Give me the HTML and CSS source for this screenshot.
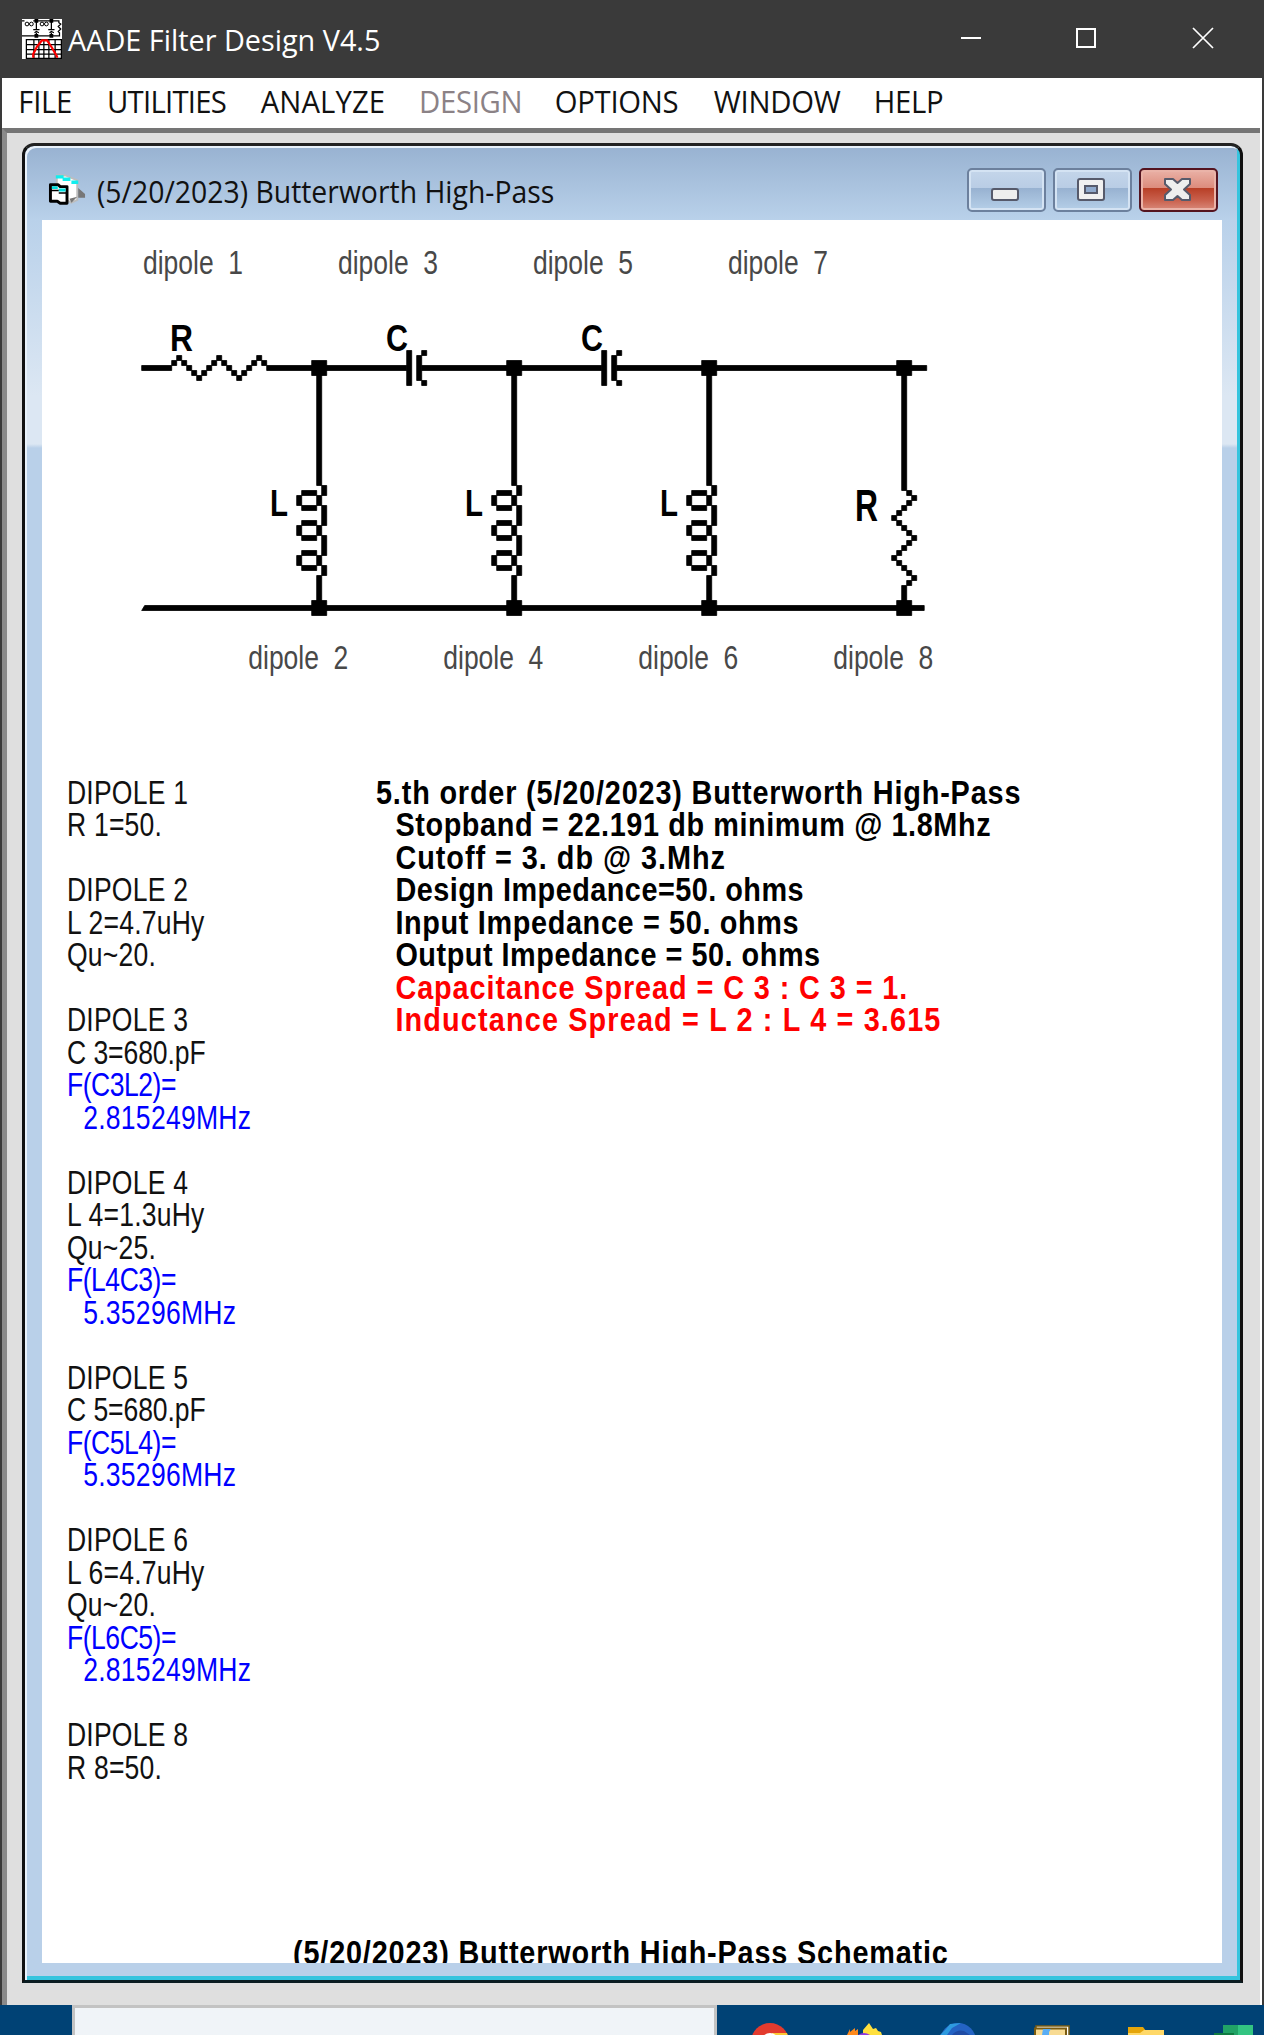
FILE: index.html
```html
<!DOCTYPE html>
<html lang="en">
<head>
<meta charset="utf-8">
<title>AADE Filter Design V4.5</title>
<link rel="stylesheet" href="styles.css">
</head>
<body>
<header class="titlebar">
  <svg class="app-icon" viewBox="0 0 32 32" preserveAspectRatio="none">
    <path fill="#fff" d="M0 0h32v32H0z"/>
    <path fill="none" stroke="#000" d="M0 1.5h2m7 0h21M0 13.500h30M11.500 0v8m0 3v3M23.500 0v8m0 3v3M9 8.500h5M21 8.500h5M10 11l1.500-1 2 1M22 11l1.500-1 2 1M29.500 1v2l1.500 1-2 2 2 2-2 2 1 1v3"/>
    <g fill="none" stroke="#000" stroke-width=".8"><circle cx="4" cy="4" r="1.500"/><circle cx="7.500" cy="4" r="1.500"/><circle cx="16" cy="4" r="1.500"/><circle cx="19.500" cy="4" r="1.500"/></g>
    <path d="M10 0h3v3h-3zM22 0h3v3h-3zM10 12h3v3h-3zM22 12h3v3h-3z"/>
    <path fill="none" stroke="#000" d="M3.500 16.500h28v15h-28zM3 20.500h28M3 24.500h28M3 28h28M9.500 16v16M13.500 16v16M17.500 16v16M21.500 16v16M26.500 16v16"/>
    <path fill="none" stroke="#f00" stroke-width="1.800" d="M9 31v-3l3-6 4-5h4l4 6 4 7v1"/>
  </svg>
  <h1 class="app-name">AADE Filter Design V4.5</h1>
  <svg class="caption-buttons" viewBox="0 0 260 40" fill="none" stroke="#fff">
    <path stroke-width="2" d="M4 19h20M120 10h18v18h-18z"/>
    <path stroke-width="1.700" d="M236 9l20 20M256 9l-20 20"/>
  </svg>
</header>

<main class="frame">
  <nav class="menu">
    <span>FILE</span><span class="tight">UTILITIES</span><span class="loose">ANALYZE</span><span class="disabled">DESIGN</span><span>OPTIONS</span><span>WINDOW</span><span>HELP</span>
  </nav>
  <div class="workspace">
    <section class="child">
      <header class="child-title">
        <svg class="form-icon" viewBox="0 0 40 36">
          <path fill="#fff" stroke="#bdbdbd" stroke-width="2" d="M9 2h9l12 5v20l-6 3-15-8z"/>
          <path fill="#777" d="M31 15l7 6v4h-7zM22 26l8-2-6 6z"/>
          <path stroke="#1ee" stroke-width="3.500" d="M8 3.500h8M15 6h8M24 9h7"/>
          <path fill="#fff" stroke="#000" stroke-width="3" stroke-linejoin="round" d="M2.500 11.500h8l2 2h7v17h-7l-3-2h-7z"/>
          <path stroke="#0dd" stroke-width="3" d="M4 14.500h6M11 17h7"/>
          <path stroke="#000" stroke-width="1.500" d="M3 17.500h8M11 20h8"/>
        </svg>
        <h2 class="child-name">(5/20/2023) Butterworth High-Pass</h2>
        <div class="child-buttons">
          <span class="btn"><svg viewBox="0 0 78 44"><rect x="25" y="21" width="26" height="11" rx="2" fill="#eee" stroke="#565a6b" stroke-width="2"/></svg></span>
          <span class="btn"><svg viewBox="0 0 78 44"><rect x="25" y="11" width="26" height="21" rx="2" fill="#f0f0f0" stroke="#565a6b" stroke-width="2"/><rect x="32" y="18" width="12" height="7" fill="#8fa9cc" stroke="#565a6b" stroke-width="2"/></svg></span>
          <span class="btn close"><svg viewBox="0 0 78 44"><path d="M26 11h8l4.500 4 4.500-4h8v5l-6 5.500 6 5.500v5h-8l-4.500-4-4.500 4h-8v-5l6-5.500-6-5.500z" fill="#eee" stroke="#565a6b" stroke-width="2" stroke-linejoin="round"/></svg></span>
        </div>
      </header>

      <div class="sheet">
        <svg class="schematic" viewBox="42 220 1180 540">
          <defs>
            <path id="node" d="M-1-1h3v3h-3z"/>
            <path id="cap" d="M0-3h1v7H0zM2-2h1v5H2zM3-3h1v1H3zM3 3h1v1H3z"/>
            <path id="coil" d="M0 0h1v24H0zM1 24h1v2H1zM-3 25H0v1h-3zM-4 26h1v2h-1zM0 26h1v2H0zM-3 28H0v1h-3zM1 28h1v4H1zM-3 31H0v1h-3zM-4 32h1v2h-1zM0 32h1v2H0zM-3 34H0v1h-3zM1 34h1v4H1zM-3 37H0v1h-3zM-4 38h1v2h-1zM0 38h1v2H0zM-3 40H0v1h-3zM1 40h1v2H1zM0 42h1v6H0z"/>
          </defs>
          <g class="wires" transform="translate(141.700 365.500) scale(5)">
            <path d="M0 0h6v1H0zM25 0h28v1H25zM56 0h36v1H56zM95 0h62v1H95zM.6 48H156.500v1H0z"/>
            <path d="M6-1h1v1H6zM7-2h1v1H7zM8-1h1v1H8zM9 0h1v1H9zM10 1h1v1h-1zM11 2h1v1h-1zM12 1h1v1h-1zM13 0h1v1h-1zM14-1h1v1h-1zM15-2h1v1h-1zM16-1h1v1h-1zM17 0h1v1h-1zM18 1h1v1h-1zM19 2h1v1h-1zM20 1h1v1h-1zM21 0h1v1h-1zM22-1h1v1h-1zM23-2h1v1h-1zM24-1h1v1h-1z"/>
            <path d="M152 0h1v25h-1zM153 25h1v1h-1zM154 26h1v1h-1zM153 27h1v1h-1zM152 28h1v1h-1zM151 29h1v1h-1zM150 30h1v1h-1zM151 31h1v1h-1zM152 32h1v1h-1zM153 33h1v1h-1zM154 34h1v1h-1zM153 35h1v1h-1zM152 36h1v1h-1zM151 37h1v1h-1zM150 38h1v1h-1zM151 39h1v1h-1zM152 40h1v1h-1zM153 41h1v1h-1zM154 42h1v1h-1zM153 43h1v1h-1zM152 44h1v4h-1z"/>
            <use href="#cap" x="53"/><use href="#cap" x="92"/>
            <use href="#coil" x="35"/><use href="#coil" x="74"/><use href="#coil" x="113"/>
            <use href="#node" x="35"/><use href="#node" x="74"/><use href="#node" x="113"/><use href="#node" x="152"/>
            <use href="#node" x="35" y="48"/><use href="#node" x="74" y="48"/><use href="#node" x="113" y="48"/><use href="#node" x="152" y="48"/>
          </g>
          <g class="part">
            <text x="170" y="351" textLength="23" lengthAdjust="spacingAndGlyphs">R</text>
            <text x="386" y="351" textLength="22" lengthAdjust="spacingAndGlyphs">C</text>
            <text x="581" y="351" textLength="22" lengthAdjust="spacingAndGlyphs">C</text>
            <text x="270" y="516" textLength="18" lengthAdjust="spacingAndGlyphs">L</text>
            <text x="465" y="516" textLength="18" lengthAdjust="spacingAndGlyphs">L</text>
            <text x="660" y="516" textLength="18" lengthAdjust="spacingAndGlyphs">L</text>
            <text class="tall" x="855" y="521" textLength="23" lengthAdjust="spacingAndGlyphs">R</text>
          </g>
          <g class="label">
            <text x="143" y="274" textLength="100" lengthAdjust="spacingAndGlyphs">dipole&#160; 1</text>
            <text x="338" y="274" textLength="100" lengthAdjust="spacingAndGlyphs">dipole&#160; 3</text>
            <text x="533" y="274" textLength="100" lengthAdjust="spacingAndGlyphs">dipole&#160; 5</text>
            <text x="728" y="274" textLength="100" lengthAdjust="spacingAndGlyphs">dipole&#160; 7</text>
            <text x="248.300" y="669" textLength="100" lengthAdjust="spacingAndGlyphs">dipole&#160; 2</text>
            <text x="443.300" y="669" textLength="100" lengthAdjust="spacingAndGlyphs">dipole&#160; 4</text>
            <text x="638.300" y="669" textLength="100" lengthAdjust="spacingAndGlyphs">dipole&#160; 6</text>
            <text x="833.300" y="669" textLength="100" lengthAdjust="spacingAndGlyphs">dipole&#160; 8</text>
          </g>
        </svg>

        <div class="report">
          <div class="parts">
            <div class="dipole"><p>DIPOLE 1</p><p>R 1=50.</p></div>
            <div class="dipole"><p>DIPOLE 2</p><p>L 2=4.7uHy</p><p>Qu~20.</p></div>
            <div class="dipole"><p>DIPOLE 3</p><p class="cap">C 3=680.pF</p><p class="freq">F(C3L2)=</p><p class="freq value">2.815249MHz</p></div>
            <div class="dipole"><p>DIPOLE 4</p><p>L 4=1.3uHy</p><p>Qu~25.</p><p class="freq">F(L4C3)=</p><p class="freq value">5.35296MHz</p></div>
            <div class="dipole"><p>DIPOLE 5</p><p class="cap">C 5=680.pF</p><p class="freq">F(C5L4)=</p><p class="freq value">5.35296MHz</p></div>
            <div class="dipole"><p>DIPOLE 6</p><p>L 6=4.7uHy</p><p>Qu~20.</p><p class="freq">F(L6C5)=</p><p class="freq value">2.815249MHz</p></div>
            <div class="dipole"><p>DIPOLE 8</p><p>R 8=50.</p></div>
          </div>
          <div class="summary">
            <p class="order">5.th order (5/20/2023) Butterworth High-Pass</p>
            <p class="stopband">Stopband = 22.191 db minimum @ 1.8Mhz</p>
            <p class="cutoff">Cutoff = 3. db @ 3.Mhz</p>
            <p class="design">Design Impedance=50. ohms</p>
            <p class="input">Input Impedance = 50. ohms</p>
            <p class="output">Output Impedance = 50. ohms</p>
            <p class="spread">Capacitance Spread = C 3 : C 3 = 1.</p>
            <p class="spread inductance">Inductance Spread = L 2 : L 4 = 3.615</p>
          </div>
        </div>
        <p class="caption">(5/20/2023) Butterworth High-Pass Schematic</p>
      </div>
    </section>
  </div>
</main>

<footer class="taskbar">
  <div class="search"></div>
  <div class="apps">
    <svg viewBox="0 0 94 30"><circle cx="47" cy="37" r="19" fill="#e33b2e"/><path fill="#fcc934" d="M49 28h15l3 9H49z"/><circle cx="47" cy="37" r="9" fill="#fff"/></svg>
    <svg viewBox="0 0 94 30"><path fill="#ff8a1c" d="M30 30l3-6v3l5-4v3l3-2v6z"/><path fill="#ffe03d" d="M46 25l6-7 4 6 3-1 2 3 3 1 1 3H46z"/><path fill="#9138e0" d="M41 30q6-4 12 0z"/></svg>
    <svg viewBox="0 0 94 30"><circle cx="47" cy="36" r="18" fill="#2463c4"/><path fill="#2d9be0" d="M29 30l6-6 4-5 11-1-9 5-5 7z"/><path fill="#1f4ca5" d="M41 30q5-6 12-4l6 4z"/></svg>
    <svg viewBox="0 0 94 30"><path fill="#fff" stroke="#7b5c11" stroke-width="1.500" d="M31 21h33v12H31z"/><path fill="#f8db93" stroke="#7b5c11" stroke-width="2" d="M30 23.500h31V33H30z"/><path fill="#58adf5" d="M38 24h8l-2 3v3h-7z"/></svg>
    <svg viewBox="0 0 94 30"><path fill="#e5a50a" d="M29 22h15l3 4-4 4H29z"/><path fill="#ffd868" d="M29 28h12l4-3h20v5H29z"/></svg>
    <svg viewBox="0 0 94 30"><path fill="#21a366" d="M30 20h15v10H30z"/><path fill="#33c481" d="M45 20h15v10H45z"/><path fill="#107c41" d="M21 28h20v2H21z"/></svg>
  </div>
</footer>
</body>
</html>
```
FILE: styles.css
```css
* { box-sizing: border-box; }
body {
  margin: 0;
  width: 1264px;
  height: 2035px;
  display: flex;
  flex-direction: column;
  overflow: hidden;
  background: #3a3a3a;
  font-family: "Open Sans", "Noto Sans", sans-serif;
}
h1, h2, p { margin: 0; font-weight: normal; white-space: nowrap; }
svg { display: block; }

.titlebar {
  flex: none;
  height: 78px;
  padding-left: 22px;
  display: flex;
  background: #3a3a3a;
  color: #fff;
}
.app-icon { width: 40px; height: 40px; margin-top: 19px; }
.app-name { margin-left: 6px; font-size: 28.800px; line-height: 40px; padding-top: 20px; }
.caption-buttons { width: 260px; height: 40px; margin: 19px 47px 0 auto; }

.frame {
  flex: none;
  height: 1927px;
  border: solid #3a3a3a;
  border-width: 0 2px;
  background: #fff;
  display: flex;
  flex-direction: column;
}
.menu {
  height: 50px;
  width: 1200px;
  padding: 1px 0 0 17.600px;
  display: grid;
  grid-template-columns: 95.300px 165.300px 170.100px 146px 171px 172px auto;
  font-size: 31.500px;
  line-height: 43px;
  transform: scaleX(.93);
  transform-origin: 0 0;
  color: #111;
}
.menu span { letter-spacing: -.3px; }
.menu .tight { letter-spacing: -.8px; }
.menu .loose { letter-spacing: .1px; }
.menu .disabled { color: #8b8286; }

.workspace {
  flex: 1;
  margin-right: 2px;
  padding: 10px 17px 22px 15px;
  border: solid #777;
  border-width: 5px 0 0 5px;
  border-top-color: #757575;
  border-left-color: #8a8a8a;
  background: #dfdfdf;
  display: flex;
}
.child {
  flex: 1;
  border: 3px solid #222;
  border-left-color: #111;
  border-right-color: #101010;
  border-bottom-color: #0b1d22;
  border-radius: 12px 12px 0 0;
  padding: 0 14px 14px 17px;
  background: linear-gradient(#98b2d1 0, #b9d1ea 74px, #dce7f3 250px, #dce7f3 298px, #b9d0e9 302px);
  box-shadow: inset 2px 2px #e9f2fb, inset -3px -4px #35c4de;
}
.child-title {
  height: 74px;
  padding: 22px 8px 0 7px;
  display: flex;
}
.form-icon { width: 39px; height: 36px; margin: 5px 1px 0 -1px; }
.child-name {
  margin: 2px 0 0 8.500px;
  width: 700px;
  font-size: 31px;
  line-height: 42px;
  transform: scaleX(.915);
  transform-origin: 0 0;
  color: #111;
}
.child-buttons { display: flex; gap: 7px; margin-left: auto; flex: none; }
.btn {
  width: 79px;
  height: 44px;
  border: 2px solid #6c809d;
  border-radius: 5px;
  background: linear-gradient(#c4d6ea 0, #b9cde5 45%, #98b2d1 46%, #b5cfe8 100%);
  box-shadow: inset 0 0 0 2px #d4e3f3;
}
.btn svg { width: 78px; height: 44px; margin: -2px; }
.btn.close {
  border-color: #541420;
  background: linear-gradient(#eab2a7 0, #dc8b7c 45%, #b83f27 46%, #c9604c 75%, #d98a7b 100%);
  box-shadow: inset 0 0 0 2px #eab3a8;
}

.sheet {
  width: 1180px;
  height: 1743px;
  background: #fff;
  overflow: hidden;
  font: 32.700px/32.500px "Liberation Sans", Arial, sans-serif;
  color: #000;
}
.schematic { width: 1180px; height: 540px; }
.wires { stroke: #000; stroke-width: .16px; }
.part { font-weight: bold; font-size: 36.300px; }
.part .tall { font-size: 43.600px; }
.label { fill: #484848; }

.report {
  height: 1176.500px;
  padding: 16.500px 0 0 25px;
  display: flex;
}
.parts {
  width: 308.500px;
  display: flex;
  flex-direction: column;
  gap: 32.500px;
  color: #111;
}
.parts p { transform: scaleX(.812); transform-origin: 0 0; letter-spacing: .25px; }
.parts .cap { letter-spacing: -.1px; }
.parts .freq { color: #00f; letter-spacing: -.6px; }
.parts .value { padding-left: 20px; letter-spacing: .3px; }
.summary { font-weight: bold; }
.summary p, .caption {
  transform: scaleX(.882);
  transform-origin: 0 0;
  font-weight: bold;
}
.summary p { padding-left: 22px; }
.summary .order { padding-left: 0; letter-spacing: .94px; }
.summary .stopband { letter-spacing: .68px; }
.summary .cutoff { letter-spacing: 1.100px; }
.summary .design { letter-spacing: .55px; }
.summary .input { letter-spacing: .74px; }
.summary .output { letter-spacing: .6px; }
.summary .spread { color: #f00; letter-spacing: 1.040px; }
.summary .inductance { letter-spacing: 1.300px; }
.caption { margin-left: 250.500px; letter-spacing: .94px; }

.taskbar {
  flex: none;
  height: 30px;
  padding-left: 72px;
  display: flex;
  background: #004275;
}
.search {
  width: 645px;
  border: 3px solid #c3c3c3;
  border-bottom: 0;
  background: #f0f4f8;
  flex: none;
}
.apps { margin-left: 6px; width: 541px; display: flex; overflow: hidden; }
.apps svg { flex: none; width: 94px; height: 30px; }
```
